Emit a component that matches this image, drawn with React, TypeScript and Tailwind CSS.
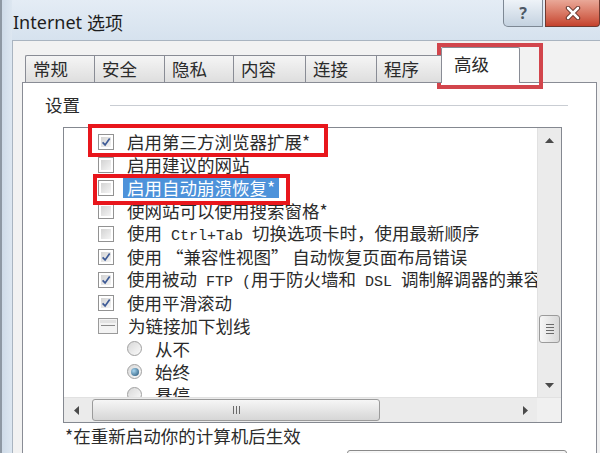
import React from "react";

type Row = {
  kind: "check" | "radio" | "group";
  on?: boolean;
  sel?: boolean;
  text: React.ReactNode;
};

const mono = "font-['Liberation_Mono',monospace] text-[15px]";

const rows: Row[] = [
  { kind: "check", on: true, text: "启用第三方浏览器扩展*" },
  { kind: "check", text: "启用建议的网站" },
  { kind: "check", sel: true, text: "启用自动崩溃恢复*" },
  { kind: "check", text: "使网站可以使用搜索窗格*" },
  {
    kind: "check",
    text: (
      <>
        使用<span className={mono}> Ctrl+Tab </span>切换选项卡时，使用最新顺序
      </>
    ),
  },
  { kind: "check", on: true, text: "使用 “兼容性视图” 自动恢复页面布局错误" },
  {
    kind: "check",
    on: true,
    text: (
      <>
        使用被动<span className={mono}> FTP (</span>用于防火墙和<span className={mono}> DSL </span>
        调制解调器的兼容性)
      </>
    ),
  },
  { kind: "check", on: true, text: "使用平滑滚动" },
  { kind: "group", text: "为链接加下划线" },
  { kind: "radio", text: "从不" },
  { kind: "radio", on: true, text: "始终" },
  { kind: "radio", text: "悬停" },
];

const tabs = [
  { label: "常规", w: "w-[69px]" },
  { label: "安全", w: "w-[70px]" },
  { label: "隐私", w: "w-[69px]" },
  { label: "内容", w: "w-[72px]" },
  { label: "连接", w: "w-[71px]" },
  { label: "程序", w: "w-[65px]" },
];

const Check = ({ on }: { on?: boolean }) => (
  <div className="w-[16px] h-[16px] shrink-0 border border-[#929292] bg-white p-[2px]">
    <div className="relative w-full h-full bg-linear-to-br from-[#d3d3d3] to-[#f5f5f5]">
      {on && (
        <svg viewBox="0 0 10 10" className="absolute inset-0 w-full h-full">
          <path d="M1.6 5.3 L4.1 7.9 L8.7 1.6" fill="none" stroke="#3e5b96" strokeWidth="1.7" />
        </svg>
      )}
    </div>
  </div>
);

const Radio = ({ on }: { on?: boolean }) => (
  <div className="w-[15px] h-[15px] shrink-0 rounded-full border border-[#a0a0a0] bg-linear-to-br from-[#d8d8d8] to-[#fbfbfb] flex items-center justify-center">
    {on && <div className="w-[8px] h-[8px] rounded-full bg-radial-[at_35%_35%] from-[#a8d6f0] to-[#1f4f72]" />}
  </div>
);

const GroupIcon = () => (
  <svg width="20" height="16" viewBox="0 0 20 16" className="shrink-0">
    <rect x="0.5" y="0.5" width="19" height="15" fill="#f3f3f3" stroke="#9a9a9a" />
    <rect x="2" y="2" width="16" height="3" fill="#e2e2e2" />
    <line x1="3" y1="7.5" x2="17" y2="7.5" stroke="#8a8a8a" />
  </svg>
);

const Tri = ({ dir }: { dir: "up" | "down" | "left" | "right" }) => {
  const pts = {
    up: "0,5 4.5,0 9,5",
    down: "0,0 9,0 4.5,5",
    left: "5,0 5,9 0,4.5",
    right: "0,0 0,9 5,4.5",
  }[dir];
  const vertical = dir === "up" || dir === "down";
  return (
    <svg width={vertical ? 9 : 5} height={vertical ? 5 : 9} viewBox={vertical ? "0 0 9 5" : "0 0 5 9"}>
      <polygon points={pts} fill="#4a4a4a" />
    </svg>
  );
};

export default function App() {
  return (
    <div className="relative w-[600px] h-[453px] overflow-hidden flex bg-[#dbe5f0] text-[#2b2b2b] font-['Noto_Sans','Noto_Sans_CJK_SC',sans-serif]">
      {/* left window frame */}
      <div className="w-[12px] h-full shrink-0 border-l-[2px] border-[#8e98a3] bg-linear-to-r from-[#cfdbe8] to-[#dde7f1]" />

      <div className="flex-1 flex flex-col min-w-0">
        {/* title bar */}
        <div className="h-[40px] shrink-0 flex items-start justify-between bg-linear-to-b from-[#e4ecf5] to-[#d6e2ee]">
          <div className="h-full flex items-center pt-[4px] pl-[1px] text-[18px] text-[#1e1e1e]">
            Internet <span className="ml-[5px] font-['Noto_Sans_CJK_SC',sans-serif]">选项</span>
          </div>
          <div className="flex gap-[2px]">
            <div className="w-[40px] h-[27px] rounded-bl-[5px] border border-t-0 border-[#7d8894] bg-linear-to-b from-[#eef3f8] to-[#c4d2e0] flex items-center justify-center text-[16px] font-bold text-[#4d5966]">
              ?
            </div>
            <div className="w-[55px] h-[27px] rounded-br-[4px] border border-t-0 border-[#6e3a31] bg-linear-to-b from-[#e9a898] to-[#c4412c] flex items-center justify-center">
              <svg width="16" height="14" viewBox="0 0 16 14">
                <path d="M3 2 L13 12 M13 2 L3 12" stroke="#5a2a22" strokeWidth="4.4" strokeLinecap="round" />
                <path d="M3 2 L13 12 M13 2 L3 12" stroke="#ffffff" strokeWidth="2.6" strokeLinecap="round" />
              </svg>
            </div>
          </div>
        </div>

        {/* dialog body */}
        <div className="flex-1 flex flex-col bg-[#f2f2f2] border-t border-l border-[#a9b4c0] pl-[9px] pt-[6px]">
          {/* tabs */}
          <div className="relative z-10 flex items-end h-[36px] -mb-px ml-[3px] text-[17.5px] font-['Noto_Sans_CJK_SC',sans-serif]">
            {tabs.map((t, i) => (
              <div
                key={t.label}
                className={`${t.w} h-[28px] flex items-center pl-[7px] border-t border-b border-l border-[#898c95] bg-linear-to-b from-[#f5f5f5] to-[#dedede] ${
                  i === 0 ? "rounded-tl-[2px]" : ""
                }`}
              >
                {t.label}
              </div>
            ))}
            <div className="w-[79px] h-[36px] flex items-center pl-[12px] pb-[2px] bg-white border-t border-l border-r border-[#898c95] rounded-t-[2px]">
              高级
            </div>
          </div>

          {/* tab panel */}
          <div className="flex-1 mr-[3px] bg-white border border-[#898c95] pt-[12px] pl-[22px] pr-[22px] text-[17.5px] font-['Noto_Sans_CJK_SC',sans-serif]">
            <div className="h-[20px] flex items-center">
              <span className="leading-none">设置</span>
              <div className="flex-1 h-px bg-[#c9cdd3] ml-[30px] mr-[6px]" />
            </div>

            {/* list box */}
            <div className="ml-[18px] mt-[12px] w-[499px] h-[296px] border border-[#848890] flex flex-col">
              <div className="flex h-[269px]">
                <div className="flex-1 overflow-hidden pt-[2px] min-w-0">
                  {rows.map((r, i) => (
                    <div key={i} className="h-[23px] flex items-center whitespace-nowrap leading-none">
                      {r.kind === "check" && (
                        <div className="ml-[34px] flex items-center">
                          <Check on={r.on} />
                        </div>
                      )}
                      {r.kind === "group" && (
                        <div className="ml-[34px] flex items-center">
                          <GroupIcon />
                        </div>
                      )}
                      {r.kind === "radio" && (
                        <div className="ml-[63px] flex items-center">
                          <Radio on={r.on} />
                        </div>
                      )}
                      {r.sel ? (
                        <span className="ml-[9px] px-[4px] h-[20px] flex items-center bg-[#4d92da] text-white">
                          {r.text}
                        </span>
                      ) : (
                        <span
                          className={
                            r.kind === "radio" ? "ml-[13px]" : r.kind === "group" ? "ml-[10px]" : "ml-[13px]"
                          }
                        >
                          {r.text}
                        </span>
                      )}
                    </div>
                  ))}
                </div>

                {/* vertical scrollbar */}
                <div className="w-[24px] shrink-0 flex flex-col bg-[#ebebeb] border-l border-[#e1e1e1]">
                  <div className="h-[24px] flex items-center justify-center">
                    <Tri dir="up" />
                  </div>
                  <div className="h-[163px]" />
                  <div className="h-[28px] mx-[1px] rounded-[3px] border border-[#9b9b9b] bg-linear-to-r from-[#f6f6f6] to-[#d9d9d9] flex flex-col items-center justify-center gap-[2px]">
                    <div className="w-[8px] h-px bg-[#6a6a6a]" />
                    <div className="w-[8px] h-px bg-[#6a6a6a]" />
                    <div className="w-[8px] h-px bg-[#6a6a6a]" />
                    <div className="w-[8px] h-px bg-[#6a6a6a]" />
                  </div>
                  <div className="flex-1" />
                  <div className="h-[24px] flex items-center justify-center">
                    <Tri dir="down" />
                  </div>
                </div>
              </div>

              {/* horizontal scrollbar */}
              <div className="flex-1 flex border-t border-[#e1e1e1]">
                <div className="flex-1 flex bg-[#ebebeb]">
                  <div className="w-[24px] flex items-center justify-center">
                    <Tri dir="left" />
                  </div>
                  <div className="w-[288px] my-[1px] ml-[4px] rounded-[3px] border border-[#9b9b9b] bg-linear-to-b from-[#f6f6f6] to-[#d6d6d6] flex items-center justify-center gap-[2px]">
                    <div className="w-px h-[8px] bg-[#6a6a6a]" />
                    <div className="w-px h-[8px] bg-[#6a6a6a]" />
                    <div className="w-px h-[8px] bg-[#6a6a6a]" />
                  </div>
                  <div className="flex-1" />
                  <div className="w-[24px] flex items-center justify-center">
                    <Tri dir="right" />
                  </div>
                </div>
                <div className="w-[24px] bg-[#f0f0f0]" />
              </div>
            </div>

            {/* footer note */}
            <div className="ml-[20px] mt-[4px] h-[18px] flex items-center whitespace-nowrap">
              *在重新启动你的计算机后生效
            </div>
            <div className="ml-[302px] mt-[5px] w-[220px] h-[28px] rounded-[3px] border border-[#8a8a8a] bg-linear-to-b from-[#f7f7f7] to-[#e2e2e2]" />
          </div>
        </div>
      </div>

      {/* red annotation boxes */}
      <div className="absolute left-[88px] top-[124px] w-[240px] h-[33px] border-[4px] border-[#e8161c]" />
      <div className="absolute left-[93px] top-[174px] w-[197px] h-[31px] border-[4px] border-[#e8161c]" />
      <div className="absolute left-[437px] top-[43px] w-[106px] h-[46px] border-[4px] border-[#d2454c]" />
    </div>
  );
}
